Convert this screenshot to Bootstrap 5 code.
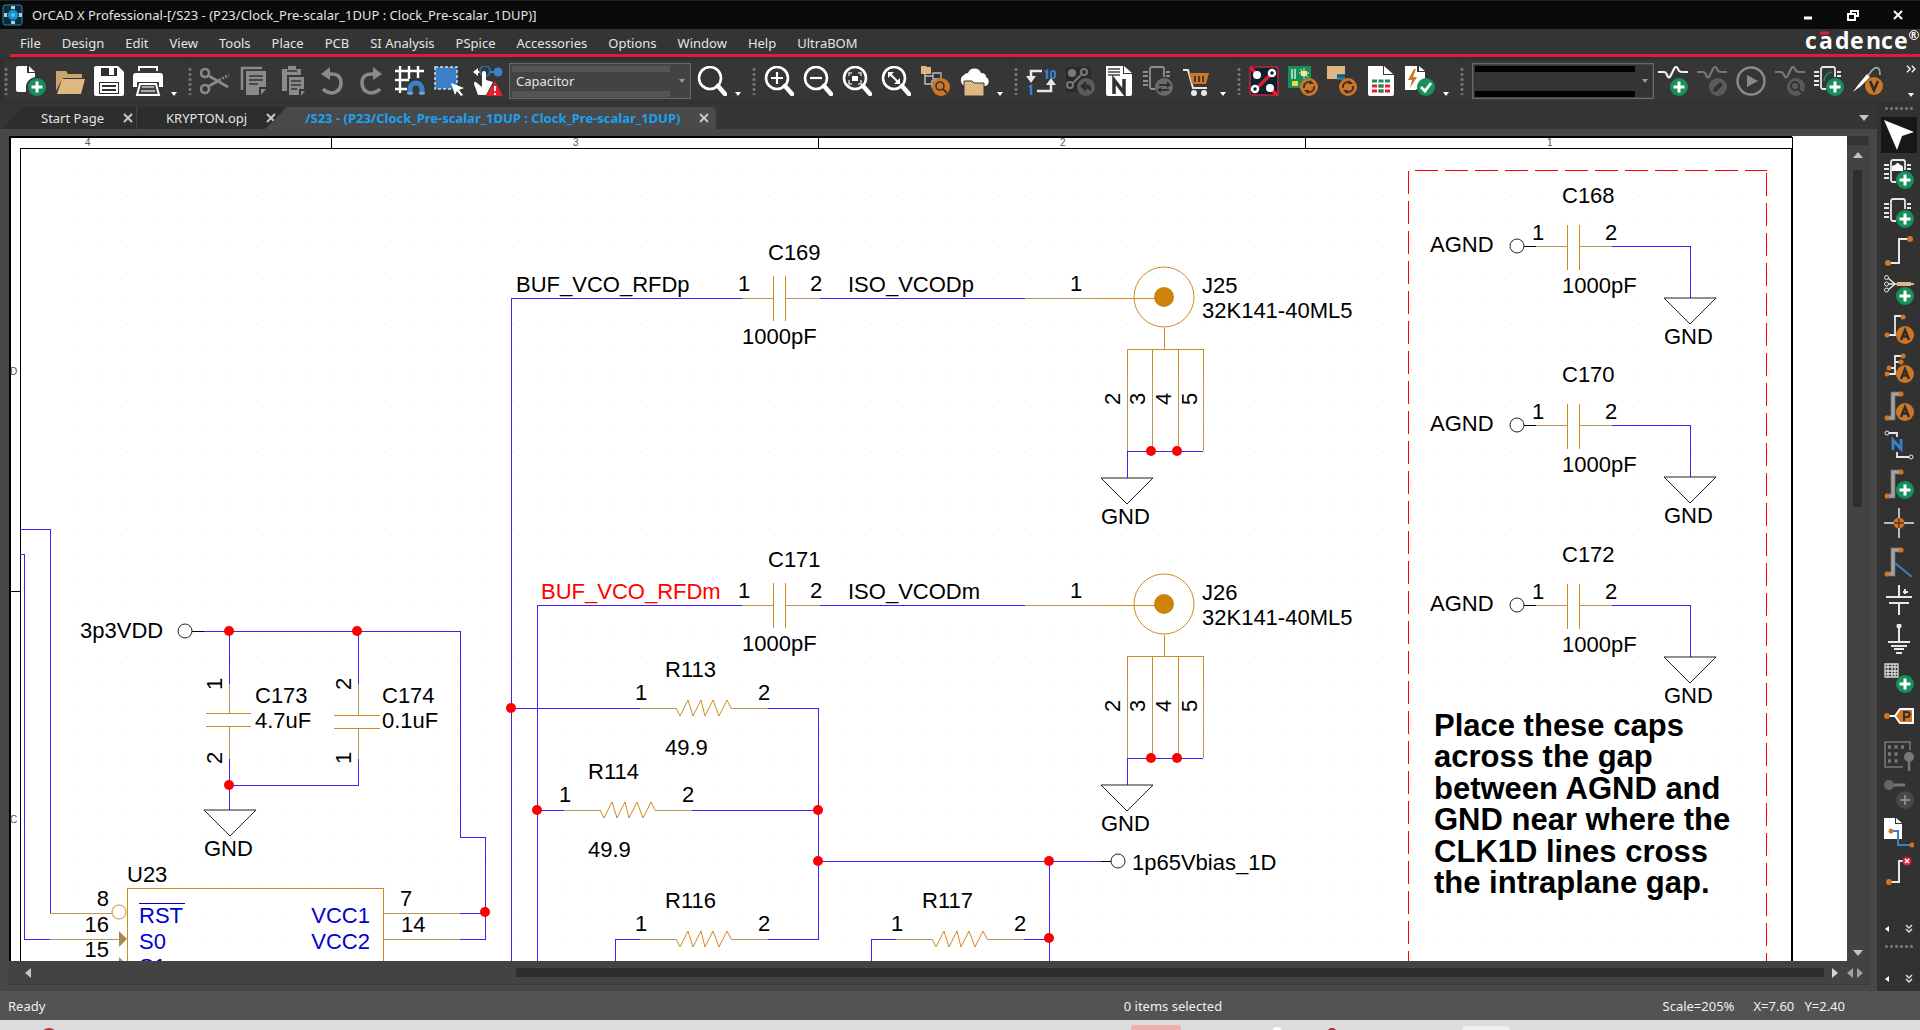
<!DOCTYPE html>
<html lang="en">
<head>
<meta charset="utf-8">
<meta name="viewport" content="width=device-width, initial-scale=1">
<title>OrCAD X Professional</title>
<link href="https://cdn.jsdelivr.net/npm/bootstrap@5.3.0/dist/css/bootstrap.min.css" rel="stylesheet">
<style>
  body { font-family: "Noto Sans", "Open Sans", sans-serif; font-size: 13px; line-height: 18px; color: #e4e4e4; background: #343434; overflow: hidden; }
  button { color: inherit; }
  svg { display: block; }
  .titlebar { height: 29px; background: #0a0a0a; border-top: 1px solid #222; padding-left: 2px; }
  .winbtn { width: 45px; height: 24px; }
  .menubar { height: 28px; margin-left: 10px; padding-left: 10px; border-bottom: 3px solid #e31b38; gap: 21px; }
  .menubar a { color: #e4e4e4; padding-top: 2px; }
  .tools { height: 46px; padding: 3px 0 1px 4px; background: #303030; }
  .toolgroup { height: 42px; background: #363636; border-radius: 4px; }
  .dotgrip { width: 4px; height: 28px; margin-right: 8px; background: radial-gradient(circle, #777 1px, transparent 2px) 0 0/4px 5px; }
  .iconrow { gap: 9px; }
  .ico { width: 30px; height: 30px; }
  .ico svg { width: 30px; height: 30px; }
  .caretbtn { width: 25px; height: 30px; padding: 26px 0 0 8px; }
  .combowrap { margin: 0 6px; }
  .combowrap-first { margin: 0 4px 0 0; }
  .combo { width: 182px; height: 36px; border: 1px solid #6a6a6a; outline: 1px solid #444; outline-offset: -2px; padding: 0 6px; color: #e4e4e4; appearance: none; border-radius: 0;
    background: linear-gradient(#555,#555) 2px 2px/158px 6px no-repeat, linear-gradient(#555,#555) 2px 27px/158px 6px no-repeat, #434343; }
  .combo-dark { background: linear-gradient(#000,#000) 2px 2px/160px 6px no-repeat, linear-gradient(#000,#000) 2px 27px/160px 6px no-repeat, #343434; }
  .combowrap::after { content: ""; position: absolute; right: 6px; top: 16px; border: 3px solid transparent; border-top: 4px solid #999; }
  .tabstrip { height: 26px; background: #353535; padding-left: 3px; }
  .doctab { height: 22px; background: #2d2d2d; clip-path: polygon(19px 0, 100% 0, 100% 100%, 0 100%); }
  .doctab a { padding-left: 29px; }
  .doctab-first a { padding-left: 38px; }
  .doctab-mid { clip-path: none; border-left: 1px solid #444; }
  .doctab-on { background: #494949; color: #1ba1f2; font-weight: 700; margin-left: -18px; border-radius: 0 4px 0 0; clip-path: polygon(22px 0, 100% 0, 100% 100%, 0 100%); }
  .doctab-on a { padding-left: 40px; }
  .closex { width: 16px; height: 16px; color: #c8c8c8; }
  .docarea { background: #474747; padding: 7px 8px 6px 9px; }
  .docframe { background: #434343; border-right: 1px solid #3a3a3a; border-bottom: 1px solid #3a3a3a; }
  .sheetview { background: #fff; }
  .vscroll { width: 21px; border-top: 9px solid #333; padding: 7px 0 5px; }
  .hscroll { height: 23px; padding-left: 16px; }
  .thumb { background: #2e2e2e; }
  .vscroll .thumb { width: 9px; height: 337px; }
  .hscroll .thumb { height: 9px; flex: 1305 1 0; }
  .hscroll .room { flex: 484 1 0; }
  .sidebar-tools { width: 43px; background: #323232; border-radius: 5px 0 0 0; }
  .sidegrip { width: 30px; height: 3px; margin: 4px 0 3px; background: radial-gradient(circle, #777 1px, transparent 2px) 0 0/5px 3px; }
  .side { width: 36px; height: 36px; padding: 3px; }
  .side svg { width: 30px; height: 30px; }
  .side-on { background: #171717; }
  .sideicons { height: 773px; }
  .morerow { height: 24px; width: 36px; }
  .statusbar { height: 29px; background: #535353; color: #f0f0f0; padding: 0 8px; }
  .statusbar .left { flex: 1112 1 0; }
  .statusbar .mid { flex: 537 1 0; }
  .statusbar .right { gap: 19px; padding-right: 67px; }
  .deskedge { height: 10px; background: #dcdcdc; }
  .sch text { font-family: "Liberation Sans", Arial, sans-serif; font-size: 22px; fill: #000; }
  .sch .tiny { font-size: 10px; fill: #555; }
  .sch .net { fill: #0000d0; }
  .sch .hot { fill: #ff0000; }
  .sch .note { font-size: 31px; font-weight: 700; }
  .wire { stroke: #4c1cf8; fill: none; shape-rendering: crispEdges; }
  .pin { stroke: #b5985a; fill: none; shape-rendering: crispEdges; }
  .part { stroke: #d08a1e; fill: none; shape-rendering: crispEdges; }
  .curve { stroke: #d08a1e; fill: none; }
  .ink { stroke: #000; fill: none; shape-rendering: crispEdges; }
  .inkc { stroke: #222; fill: #fff; }
  .dash { stroke: #ff0000; fill: none; stroke-dasharray: 23 7; shape-rendering: crispEdges; }
  .node circle { fill: #ff0000; }
</style>
</head>
<body class="d-flex flex-column vh-100">

<svg width="0" height="0" class="position-absolute" aria-hidden="true">
  <defs>
    <g id="b-plus"><circle cx="21" cy="21" r="9" fill="#16905a"/><path d="M21 15.500v11M15.500 21h11" stroke="#fff" stroke-width="3"/></g>
    <g id="b-a"><circle cx="21" cy="21" r="9" fill="#cf7626"/><path d="M17 26l4-10 4 10M18.500 22.500h5" stroke="#2c2c2c" stroke-width="2.400" fill="none"/></g>
    <g id="b-sync"><circle cx="21" cy="21" r="9" fill="#cf7626"/><path d="M16 22a5 5 0 0 1 8-5M26 20a5 5 0 0 1-8 5" stroke="#333" stroke-width="1.800" fill="none"/><path d="M22 14l4 4h-5zM20 28l-4-4h5z" fill="#333"/></g>
    <g id="b-lens"><circle cx="13" cy="12" r="11" fill="none" stroke="#fff" stroke-width="2.600"/><path d="M21 20l7 8" stroke="#fff" stroke-width="4.500" stroke-linecap="round"/></g>
    <g id="b-chip" fill="none" stroke="#e8e8e8" stroke-width="1.800"><path d="M12 23H9a2 2 0 0 1-2-2V3a2 2 0 0 1 2-2h10a2 2 0 0 1 2 2v8"/><path d="M0 6h5M0 10h5M0 15h5M0 19h5M23 6h4M23 10h4"/></g>
    <g id="b-bus"><path d="M2 27h7V3h8" fill="none" stroke="#8e8e8e" stroke-width="4.500"/><path d="M2 27h7V3h8" fill="none" stroke="#b9b9b9"/><circle cx="3" cy="27" r="2.500" fill="#cf7626"/><circle cx="17" cy="3" r="2.500" fill="#cf7626"/></g>
    <symbol id="i-new" viewBox="0 0 30 30"><path d="M0 2a2 2 0 0 1 2-2h9v7h8v4q-8 2-9 9v6H2a2 2 0 0 1-2-2zM13 0l6 6h-6z" fill="#fff"/><use href="#b-plus"/></symbol>
    <symbol id="i-open" viewBox="0 0 30 30"><path d="M1 5h10l2 3h14v4H8l-3 5-4 8z" fill="#caa46e"/><path d="M7 13h23l-4 15H2z" fill="#deb781"/></symbol>
    <symbol id="i-save" viewBox="0 0 30 30"><path d="M2 0h22l6 6v22a2 2 0 0 1-2 2H2a2 2 0 0 1-2-2V2a2 2 0 0 1 2-2z" fill="#fff"/><path d="M7 2h16v8H7zM5 16h20v12H5z" fill="#303030"/><path d="M15 2h5v7h-5zM6 17h18v10H6z" fill="#fff"/><path d="M8 20h14M8 24h14" stroke="#303030" stroke-width="2"/></symbol>
    <symbol id="i-print" viewBox="0 0 30 30"><path d="M6 5V1h18v4" fill="none" stroke="#fff" stroke-width="2"/><path d="M3 7h24a3 3 0 0 1 3 3v11h-4v-5H4v5H0V10a3 3 0 0 1 3-3z" fill="#fff"/><path d="M7 18h16l3 11H4z" fill="#444" stroke="#fff" stroke-width="2"/><path d="M9 21h12M8 25h14" stroke="#ccc" stroke-width="1.500"/></symbol>
    <symbol id="i-cut" viewBox="0 0 30 30"><g fill="none" stroke="#8a8a8a" stroke-width="2.600"><circle cx="5" cy="7" r="4"/><circle cx="5" cy="23" r="4"/><path d="M9 10l19 11"/><path d="M9 20l9-5"/><path d="M19 14l10-5" stroke-dasharray="2 1.500"/></g></symbol>
    <symbol id="i-copy" viewBox="0 0 30 30"><path d="M3 24V2h20" fill="none" stroke="#8a8a8a" stroke-width="2.500"/><path d="M7 5h20v16h-7v8H7z" fill="#8a8a8a"/><path d="M22 23h5l-5 6z" fill="#8a8a8a"/><path d="M10 10h14M10 14h14M10 18h9" stroke="#343434" stroke-width="1.500"/></symbol>
    <symbol id="i-paste" viewBox="0 0 30 30"><path d="M4 3h6V0h8v3h5v6H9v16H4z" fill="#8a8a8a"/><path d="M11 11h15v12h-5v6H11zM23 25h4l-4 5z" fill="#8a8a8a"/><path d="M9 5h10M13 15h10M13 19h10M13 23h6" stroke="#343434" stroke-width="1.500"/></symbol>
    <symbol id="i-undo" viewBox="0 0 30 30"><path d="M12 8q12-1 12 9 0 8-8 10-6 0-10-4" fill="none" stroke="#8a8a8a" stroke-width="3.500"/><path d="M4 8l9-7v13z" fill="#8a8a8a"/></symbol>
    <symbol id="i-redo" viewBox="0 0 30 30"><path d="M18 8Q6 7 6 17q0 8 8 10 6 0 10-4" fill="none" stroke="#8a8a8a" stroke-width="3.500"/><path d="M26 8l-9-7v13z" fill="#8a8a8a"/></symbol>
    <symbol id="i-grid" viewBox="0 0 30 30"><path d="M5 0v27M14 0v13M23 0v12M0 5h29M0 14h14M0 23h12" stroke="#fff" stroke-width="2.400"/><path d="M15 29v-6a6 6 0 0 1 12 0v6" fill="none" stroke="#3a80c8" stroke-width="5"/><path d="M12 27h6M24 27h6" stroke="#bcd" stroke-width="1"/></symbol>
    <symbol id="i-select" viewBox="0 0 30 30"><path d="M1 1h22v22H1z" fill="#3a80c8" stroke="#cfe0f0" stroke-width="1.500" stroke-dasharray="3 2"/><path d="M17 17l13 5-5 2 4 5-2 1-4-5-2 4z" fill="#fff"/></symbol>
    <symbol id="i-hand" viewBox="0 0 30 30"><path d="M0 6l5-4v3h3v2H5v3z" fill="#fff"/><circle cx="12" cy="5" r="5" fill="none" stroke="#2d6ba8" stroke-width="2"/><circle cx="25" cy="6" r="4.500" fill="#3a80c8"/><path d="M17 6h4" stroke="#3a80c8" stroke-width="2"/><path d="M9 7a2 2 0 0 1 4 0v7l7 2-7 13H5L1 18q0-4 3-1l5 4z" fill="#fff"/><path d="M22 15l8 15H13z" fill="#e3202e"/><path d="M22 20v5M22 27v2" stroke="#fff" stroke-width="1.800"/></symbol>
    <symbol id="i-search" viewBox="0 0 30 30"><use href="#b-lens"/></symbol>
    <symbol id="i-zin" viewBox="0 0 30 30"><use href="#b-lens"/><path d="M13 6v12M7 12h12" stroke="#fff" stroke-width="2.200"/></symbol>
    <symbol id="i-zout" viewBox="0 0 30 30"><use href="#b-lens"/><path d="M7 12h12" stroke="#fff" stroke-width="2.200"/></symbol>
    <symbol id="i-zarea" viewBox="0 0 30 30"><use href="#b-lens"/><path d="M10 10h6v5h-6z" fill="#fff"/><path d="M7 10V7h3M16 7h3v3M19 14v4h-3M10 18H7v-4" fill="none" stroke="#ccc" stroke-width="1.500"/></symbol>
    <symbol id="i-zall" viewBox="0 0 30 30"><use href="#b-lens"/><path d="M9 8l8 8" stroke="#fff" stroke-width="2"/><path d="M7 6h6l-6 6zM19 18h-6l6-6z" fill="#fff"/></symbol>
    <symbol id="i-tree" viewBox="0 0 30 30"><path d="M1 0h5l1 1h4v7H1z" fill="#deb781"/><path d="M5 8v10h7M5 10h8" fill="none" stroke="#bbb" stroke-width="1.500"/><path d="M13 7h8v6h-8zM12 15h7v6h-7z" fill="none" stroke="#bbb" stroke-width="1.300"/><circle cx="21" cy="21" r="9" fill="#cf7626"/><circle cx="20" cy="20" r="4" fill="none" stroke="#333" stroke-width="1.600"/><path d="M23 23l4 4" stroke="#333" stroke-width="2"/></symbol>
    <symbol id="i-cloud" viewBox="0 0 30 30"><path d="M6 20a6 6 0 0 1-1-11q1-2 4-2a7 7 0 0 1 13 0q5 0 5 4a5 5 0 0 1 0 9z" fill="#fff"/><path d="M5 15h8l2 2h10v13H5z" fill="#deb781" stroke="#343434"/></symbol>
    <symbol id="i-renum" viewBox="0 0 30 30"><path d="M16 5H5v7M11 25h14v-8" fill="none" stroke="#e8e8e8" stroke-width="2.500"/><path d="M0 10h10l-5 7zM20 19h10l-5-7z" fill="#e8e8e8"/><path d="M19 6l2-1v8M3 21l2-1v9" stroke="#3a80c8" stroke-width="2.500" fill="none"/><rect x="25" y="5" width="4" height="7" rx="2" fill="none" stroke="#3a80c8" stroke-width="2"/></symbol>
    <symbol id="i-back" viewBox="0 0 30 30"><path d="M1 1h25v13H14v12H1z" fill="#2a2a2a"/><circle cx="7" cy="7" r="4" fill="#7a7a7a"/><circle cx="19" cy="6" r="3" fill="none" stroke="#7a7a7a" stroke-width="2"/><circle cx="5" cy="19" r="3" fill="none" stroke="#7a7a7a" stroke-width="2"/><path d="M8 17l8-8" stroke="#7a7a7a" stroke-width="2"/><circle cx="21" cy="21" r="9" fill="#5c5c5c"/><path d="M15 20l6-5v3q6 0 5 8-2-4-5-3v3z" fill="#2d2d2d"/></symbol>
    <symbol id="i-net" viewBox="0 0 30 30"><path d="M2 0h17v8h9v20a2 2 0 0 1-2 2H4a2 2 0 0 1-2-2zM20 0l8 7h-8z" fill="#fff"/><path d="M4 3h12M4 6h12M4 9h12" stroke="#444" stroke-width="1.500"/><path d="M10 28V14l10 13V13" fill="none" stroke="#303030" stroke-width="3.500"/></symbol>
    <symbol id="i-chipsync" viewBox="0 0 30 30"><g opacity=".5"><use href="#b-chip"/></g><circle cx="21" cy="21" r="9" fill="#6a6a6a"/><path d="M16 19h9M17 24h9" stroke="#303030" stroke-width="1.800"/><path d="M24 15l4 4-4 3zM18 21l-4 3 4 3z" fill="#303030"/></symbol>
    <symbol id="i-cart" viewBox="0 0 30 30"><path d="M1 4h5l5 18h14" fill="none" stroke="#e8e8e8" stroke-width="2"/><path d="M7 7h20l-3 11H10z" fill="#cf7626"/><path d="M13 10v6M17 10v6M21 10v6" stroke="#333" stroke-width="1.800"/><circle cx="12" cy="27" r="3" fill="#e8e8e8"/><circle cx="22" cy="27" r="3" fill="#e8e8e8"/></symbol>
    <symbol id="i-pcb" viewBox="0 0 30 30"><rect x="1" y="1" width="28" height="28" rx="3" fill="#08222e" stroke="#c9203a" stroke-width="1.500"/><path d="M1 1l5 5M7 23L22 8M21 22l8 8" stroke="#e31b38" stroke-width="3.500"/><circle cx="8" cy="9" r="4" fill="#fff"/><circle cx="21" cy="22" r="4" fill="#fff"/><circle cx="23" cy="7" r="3" fill="#08222e" stroke="#fff" stroke-width="2.500"/><circle cx="6" cy="23" r="3" fill="#08222e" stroke="#fff" stroke-width="2.500"/></symbol>
    <symbol id="i-board" viewBox="0 0 30 30"><path d="M0 0h23v22H0z" fill="#16905a"/><path d="M4 3v10M7 3v10" stroke="#cfe9db" stroke-width="1.500"/><path d="M13 5h6v5h-6z" fill="#f4e6a0"/><path d="M16 2v11M11 7h10M12 3l8 8" stroke="#f4e6a0"/><path d="M4 15h6v5H4z" fill="#f6d33a"/><use href="#b-sync"/></symbol>
    <symbol id="i-folders" viewBox="0 0 30 30"><path d="M0 0h18v13H0z" fill="#deb781"/><path d="M10 8h8v6h-8z" fill="#2179a0"/><path d="M10 10h8" stroke="#333"/><use href="#b-sync"/></symbol>
    <symbol id="i-sheet" viewBox="0 0 30 30"><path d="M2 0h15v9h11v19a2 2 0 0 1-2 2H4a2 2 0 0 1-2-2zM18 0l9 8h-9z" fill="#fff"/><g stroke-width="3" fill="none"><path d="M6 15h18" stroke="#16905a" stroke-dasharray="5 1.500"/><path d="M6 20h18M6 25h18" stroke="#e31b38" stroke-dasharray="5 1.500"/><path d="M12.500 20h5M12.500 25h5" stroke="#16905a"/></g></symbol>
    <symbol id="i-check" viewBox="0 0 30 30"><path d="M0 0h12v6h8v7l-9 11H0zM14 0l6 5h-6z" fill="#fff"/><path d="M9 3L3 14h4l-2 8 7-11H8l3-8z" fill="#cf7626"/><circle cx="21" cy="21" r="9" fill="#16905a"/><path d="M16 21l4 4 6-8" fill="none" stroke="#fff" stroke-width="2.800"/></symbol>
    <g id="b-wave"><path d="M0 6h6q2 0 3 3 2 5 4 0l3-6q2-4 4 0 1 3 4 3h6" fill="none" stroke-width="2.200"/></g>
    <symbol id="i-wplus" viewBox="0 0 30 30"><use href="#b-wave" stroke="#eee"/><use href="#b-plus"/></symbol>
    <symbol id="i-wedit" viewBox="0 0 30 30"><use href="#b-wave" stroke="#777"/><circle cx="21" cy="21" r="9" fill="#5a5a5a"/><path d="M16 26l1-4 6-6 3 3-6 6z" fill="#303030"/></symbol>
    <symbol id="i-run" viewBox="0 0 30 30"><circle cx="15" cy="15" r="13.500" fill="none" stroke="#8a8a8a" stroke-width="2.400"/><path d="M11 9l11 6-11 6z" fill="#8a8a8a"/></symbol>
    <symbol id="i-wfind" viewBox="0 0 30 30"><use href="#b-wave" stroke="#777"/><circle cx="21" cy="21" r="9" fill="#5a5a5a"/><circle cx="20" cy="20" r="4" fill="none" stroke="#303030" stroke-width="1.800"/><path d="M23 23l4 4" stroke="#303030" stroke-width="2"/></symbol>
    <symbol id="i-part" viewBox="0 0 30 30"><use href="#b-chip"/><path d="M10 15q1-8 8-9" fill="none" stroke="#16905a" stroke-width="1.500"/><use href="#b-plus"/></symbol>
    <symbol id="i-probe" viewBox="0 0 30 30"><path d="M0 26l5-7L14 8l3 3-9 9z" fill="#fff"/><path d="M15 10q6-10 10-8 2 1 2 7" fill="none" stroke="#aaa" stroke-width="1.600"/><circle cx="21" cy="20" r="9" fill="#cf7626"/><path d="M17 15l4 9 4-9" fill="none" stroke="#303030" stroke-width="2.800"/></symbol>
    <symbol id="s-arrow" viewBox="0 0 30 30"><path d="M0 0l30 12-12 4-5 14z" fill="#fff"/></symbol>
    <symbol id="s-chipcloud" viewBox="0 0 30 30"><use href="#b-chip"/><path d="M8 12V8q0-2 3-2 3-4 5 0 3 0 3 3v3z" fill="#fff"/><use href="#b-plus"/></symbol>
    <symbol id="s-chip" viewBox="0 0 30 30"><use href="#b-chip"/><use href="#b-plus"/></symbol>
    <symbol id="s-wire" viewBox="0 0 30 30"><path d="M4 27h11V3h11" fill="none" stroke="#e8e8e8" stroke-width="2"/><circle cx="4" cy="27" r="3" fill="#cf7626"/><circle cx="26" cy="3" r="3" fill="#cf7626"/></symbol>
    <symbol id="s-bundle" viewBox="0 0 30 30"><path d="M4 3l7 6-7 6M4 9h26" fill="none" stroke="#e8e8e8" stroke-width="1.500"/><circle cx="2.500" cy="2.500" r="2" fill="#323232" stroke="#e8e8e8"/><circle cx="2.500" cy="9" r="2" fill="#323232" stroke="#e8e8e8"/><circle cx="2.500" cy="15" r="2" fill="#323232" stroke="#e8e8e8"/><path d="M13 7h14v4H13z" fill="#deb781"/><use href="#b-plus"/></symbol>
    <symbol id="s-wirea" viewBox="0 0 30 30"><path d="M3 21h8V2h8" fill="none" stroke="#e8e8e8" stroke-width="1.800"/><circle cx="3" cy="21" r="2.500" fill="#cf7626"/><circle cx="19" cy="3" r="2.500" fill="#cf7626"/><use href="#b-a"/></symbol>
    <symbol id="s-wiresa" viewBox="0 0 30 30"><path d="M3 21h8V3h8M5 15h6M11 9h6" fill="none" stroke="#e8e8e8" stroke-width="1.800"/><g fill="#cf7626"><circle cx="3" cy="21" r="2.500"/><circle cx="5" cy="15" r="2.500"/><circle cx="17" cy="9" r="2.500"/><circle cx="19" cy="3" r="2.500"/></g><use href="#b-a"/></symbol>
    <symbol id="s-busa" viewBox="0 0 30 30"><use href="#b-bus"/><use href="#b-a"/></symbol>
    <symbol id="s-n" viewBox="0 0 30 30"><path d="M4 3h9v4M13 22v5h13" fill="none" stroke="#e8e8e8" stroke-width="1.800"/><circle cx="3" cy="3" r="2" fill="#323232" stroke="#e8e8e8"/><circle cx="27" cy="27" r="2" fill="#323232" stroke="#e8e8e8"/><path d="M9 20V10l8 9V9" fill="none" stroke="#3a80c8" stroke-width="2.800"/></symbol>
    <symbol id="s-busplus" viewBox="0 0 30 30"><use href="#b-bus"/><use href="#b-plus"/></symbol>
    <symbol id="s-cross" viewBox="0 0 30 30"><circle cx="15" cy="15" r="5.500" fill="#cf7626"/><path d="M15 0v10M15 20v10M0 15h10M20 15h10" stroke="#e8e8e8" stroke-width="1.500"/><path d="M15 10v10M10 15h10" stroke="#5a3210" stroke-width="1.300"/></symbol>
    <symbol id="s-entry" viewBox="0 0 30 30"><use href="#b-bus"/><path d="M11 16l17 14" stroke="#3a80c8" stroke-width="2"/></symbol>
    <symbol id="s-power" viewBox="0 0 30 30"><path d="M15 0v12M15 18v12M21 4v5M19 7h5" stroke="#e8e8e8" stroke-width="2"/><path d="M2 12h26M5 18h20" stroke="#e8e8e8" stroke-width="2"/></symbol>
    <symbol id="s-ground" viewBox="0 0 30 30"><circle cx="15" cy="2" r="2.500" fill="#e8e8e8"/><path d="M15 2v16M4 18h22M7 22h16M10 25h10M12 29h6" stroke="#e8e8e8" stroke-width="2"/></symbol>
    <symbol id="s-block" viewBox="0 0 30 30"><path d="M1 1h13v13H1zM4 1v13M8 1v13M11 1v13M1 4h13M1 8h13M1 11h13" fill="none" stroke="#d8d8d8" stroke-width="1.300"/><use href="#b-plus"/></symbol>
    <symbol id="s-port" viewBox="0 0 30 30"><path d="M3 14h8l5-7h13v14H16l-5-7" fill="#cf7626" stroke="#fff" stroke-width="2"/><circle cx="3" cy="14" r="3" fill="#cf7626"/><path d="M20 19v-9h3a2.500 2.500 0 0 1 0 5h-3" fill="none" stroke="#303030" stroke-width="2"/></symbol>
    <symbol id="s-blockpin" viewBox="0 0 30 30"><path d="M19 26H1V1h25v8" fill="none" stroke="#777" stroke-width="1.600"/><path d="M4 6h17M4 13h12M4 20h12" stroke="#777" stroke-width="3.500" stroke-dasharray="3 3.500"/><circle cx="25" cy="16" r="5" fill="#777"/><path d="M25 20v10" stroke="#777" stroke-width="2.500"/></symbol>
    <symbol id="s-pin" viewBox="0 0 30 30"><circle cx="5" cy="6" r="5" fill="#666"/><path d="M10 6h11" stroke="#777" stroke-width="3"/><circle cx="21" cy="21" r="9" fill="#484848"/><path d="M21 16v10M16 21h10" stroke="#888" stroke-width="2"/></symbol>
    <symbol id="s-page" viewBox="0 0 30 30"><path d="M0 0h11v6h7v15H0zM12 0l6 5h-6z" fill="#fff"/><path d="M7 13h7v14h13" fill="none" stroke="#3a80c8" stroke-width="2"/><circle cx="7" cy="13" r="2.500" fill="#cf7626"/><circle cx="28" cy="27" r="2.500" fill="#cf7626"/></symbol>
    <symbol id="s-wirex" viewBox="0 0 30 30"><path d="M5 25h10V4h4" fill="none" stroke="#e8e8e8" stroke-width="2"/><circle cx="5" cy="25" r="3" fill="#cf7626"/><circle cx="23" cy="4" r="4.500" fill="#e3202e"/><path d="M21 2l4 4M25 2l-4 4" stroke="#fff" stroke-width="1.500"/></symbol>
    <symbol id="c-down" viewBox="0 0 6 4"><path d="M0 0h6L3 4z" fill="#fff"/></symbol>
    <symbol id="c-x" viewBox="0 0 16 16"><path d="M4 4l8 8M12 4l-8 8" stroke="currentColor" stroke-width="2"/></symbol>
    <symbol id="c-more" viewBox="0 0 12 10"><path d="M1 1l4 4-4 4M7 1l4 4-4 4" fill="none" stroke="#fff" stroke-width="1.600"/></symbol>
  </defs>
</svg>

<header class="titlebar d-flex align-items-center flex-shrink-0">
  <svg width="22" height="22" viewBox="0 0 22 22" aria-hidden="true"><rect x="1" y="1" width="19" height="20" rx="2" fill="#0c2b3c" stroke="#1c88b0"/><path d="M11 2v18M2 11h18" stroke="#b9c9d2" stroke-width="4"/><circle cx="11" cy="11" r="5.500" fill="#1593cf" stroke="#0a3d58"/><circle cx="11" cy="11" r="2" fill="#4cc0f0"/></svg>
  <span class="ms-2 flex-grow-1 text-nowrap">OrCAD X Professional-[/S23 - (P23/Clock_Pre-scalar_1DUP : Clock_Pre-scalar_1DUP)]</span>
  <button class="winbtn btn p-0 border-0 d-flex align-items-center justify-content-center" aria-label="Minimize"><svg width="12" height="12"><path d="M2 9h8" stroke="#fff" stroke-width="3"/></svg></button>
  <button class="winbtn btn p-0 border-0 d-flex align-items-center justify-content-center" aria-label="Restore"><svg width="12" height="12"><path d="M4 4V2h7v5H8" fill="none" stroke="#fff" stroke-width="2"/><path d="M1 5h7v6H1z" fill="none" stroke="#fff" stroke-width="2"/></svg></button>
  <button class="winbtn btn p-0 border-0 d-flex align-items-center justify-content-center" aria-label="Close"><svg width="12" height="12"><path d="M2 2l8 8M10 2l-8 8" stroke="#fff" stroke-width="2"/></svg></button>
</header>

<nav class="menubar d-flex align-items-center flex-shrink-0 text-nowrap" aria-label="Main menu">
  <a class="text-decoration-none" href="#">File</a><a class="text-decoration-none" href="#">Design</a><a class="text-decoration-none" href="#">Edit</a><a class="text-decoration-none" href="#">View</a><a class="text-decoration-none" href="#">Tools</a><a class="text-decoration-none" href="#">Place</a><a class="text-decoration-none" href="#">PCB</a><a class="text-decoration-none" href="#">SI Analysis</a><a class="text-decoration-none" href="#">PSpice</a><a class="text-decoration-none" href="#">Accessories</a><a class="text-decoration-none" href="#">Options</a><a class="text-decoration-none" href="#">Window</a><a class="text-decoration-none" href="#">Help</a><a class="text-decoration-none" href="#">UltraBOM</a>
  <svg class="ms-auto" width="116" height="25" role="img" aria-label="cadence"><text x="1 15 31 46 62 77 90" y="20" font-family="Liberation Sans Narrow, Open Sans, sans-serif" font-size="23" font-weight="700" fill="#fff">cadence</text><path d="M16 4h9" stroke="#e31b38" stroke-width="3"/><circle cx="110" cy="6" r="4.500" fill="none" stroke="#fff"/><text x="107" y="9" font-size="8" font-weight="700" fill="#fff">R</text></svg>
</nav>

<div class="tools d-flex flex-shrink-0" role="toolbar" aria-label="Standard">
  <div class="toolgroup d-flex align-items-center">
    <span class="dotgrip"></span>
    <div class="iconrow d-flex">
      <button class="ico btn p-0 border-0" aria-label="New"><svg><use href="#i-new"/></svg></button>
      <button class="ico btn p-0 border-0" aria-label="Open"><svg><use href="#i-open"/></svg></button>
      <button class="ico btn p-0 border-0" aria-label="Save"><svg><use href="#i-save"/></svg></button>
      <button class="ico btn p-0 border-0" aria-label="Print"><svg><use href="#i-print"/></svg></button>
    </div>
    <button class="caretbtn btn border-0" aria-label="More file tools"><svg width="6" height="4"><use href="#c-down"/></svg></button>
  </div>
  <div class="toolgroup d-flex align-items-center">
    <span class="dotgrip"></span>
    <div class="iconrow d-flex">
      <button class="ico btn p-0 border-0" aria-label="Cut"><svg><use href="#i-cut"/></svg></button>
      <button class="ico btn p-0 border-0" aria-label="Copy"><svg><use href="#i-copy"/></svg></button>
      <button class="ico btn p-0 border-0" aria-label="Paste"><svg><use href="#i-paste"/></svg></button>
      <button class="ico btn p-0 border-0" aria-label="Undo"><svg><use href="#i-undo"/></svg></button>
      <button class="ico btn p-0 border-0" aria-label="Redo"><svg><use href="#i-redo"/></svg></button>
      <button class="ico btn p-0 border-0" aria-label="Snap to grid"><svg><use href="#i-grid"/></svg></button>
      <button class="ico btn p-0 border-0" aria-label="Area select"><svg><use href="#i-select"/></svg></button>
      <button class="ico btn p-0 border-0" aria-label="Drag connected object"><svg><use href="#i-hand"/></svg></button>
    </div>
    <div class="combowrap position-relative"><select class="combo" aria-label="Part search"><option>Capacitor</option></select></div>
    <button class="ico btn p-0 border-0" aria-label="Search"><svg><use href="#i-search"/></svg></button>
    <button class="caretbtn btn border-0" aria-label="More edit tools"><svg width="6" height="4"><use href="#c-down"/></svg></button>
  </div>
  <div class="toolgroup d-flex align-items-center">
    <span class="dotgrip"></span>
    <div class="iconrow d-flex">
      <button class="ico btn p-0 border-0" aria-label="Zoom in"><svg><use href="#i-zin"/></svg></button>
      <button class="ico btn p-0 border-0" aria-label="Zoom out"><svg><use href="#i-zout"/></svg></button>
      <button class="ico btn p-0 border-0" aria-label="Zoom to region"><svg><use href="#i-zarea"/></svg></button>
      <button class="ico btn p-0 border-0" aria-label="Zoom to all"><svg><use href="#i-zall"/></svg></button>
      <button class="ico btn p-0 border-0" aria-label="Hierarchy"><svg><use href="#i-tree"/></svg></button>
      <button class="ico btn p-0 border-0" aria-label="Workspace"><svg><use href="#i-cloud"/></svg></button>
    </div>
    <button class="caretbtn btn border-0" aria-label="More view tools"><svg width="6" height="4"><use href="#c-down"/></svg></button>
  </div>
  <div class="toolgroup d-flex align-items-center">
    <span class="dotgrip"></span>
    <div class="iconrow d-flex">
      <button class="ico btn p-0 border-0" aria-label="Annotate"><svg><use href="#i-renum"/></svg></button>
      <button class="ico btn p-0 border-0" aria-label="Back annotate"><svg><use href="#i-back"/></svg></button>
      <button class="ico btn p-0 border-0" aria-label="Create netlist"><svg><use href="#i-net"/></svg></button>
      <button class="ico btn p-0 border-0" aria-label="Update parts"><svg><use href="#i-chipsync"/></svg></button>
      <button class="ico btn p-0 border-0" aria-label="Bill of materials"><svg><use href="#i-cart"/></svg></button>
    </div>
    <button class="caretbtn btn border-0" aria-label="More design tools"><svg width="6" height="4"><use href="#c-down"/></svg></button>
  </div>
  <div class="toolgroup d-flex align-items-center">
    <span class="dotgrip"></span>
    <div class="iconrow d-flex">
      <button class="ico btn p-0 border-0" aria-label="New layout"><svg><use href="#i-pcb"/></svg></button>
      <button class="ico btn p-0 border-0" aria-label="Sync layout"><svg><use href="#i-board"/></svg></button>
      <button class="ico btn p-0 border-0" aria-label="Sync folders"><svg><use href="#i-folders"/></svg></button>
      <button class="ico btn p-0 border-0" aria-label="Constraint sheet"><svg><use href="#i-sheet"/></svg></button>
      <button class="ico btn p-0 border-0" aria-label="Rule check"><svg><use href="#i-check"/></svg></button>
    </div>
    <button class="caretbtn btn border-0" aria-label="More layout tools"><svg width="6" height="4"><use href="#c-down"/></svg></button>
  </div>
  <div class="toolgroup d-flex align-items-center flex-grow-1">
    <span class="dotgrip"></span>
    <div class="combowrap combowrap-first position-relative"><select class="combo combo-dark" aria-label="Simulation profile"><option></option></select></div>
    <div class="iconrow d-flex">
      <button class="ico btn p-0 border-0" aria-label="New simulation"><svg><use href="#i-wplus"/></svg></button>
      <button class="ico btn p-0 border-0" aria-label="Edit simulation"><svg><use href="#i-wedit"/></svg></button>
      <button class="ico btn p-0 border-0" aria-label="Run"><svg><use href="#i-run"/></svg></button>
      <button class="ico btn p-0 border-0" aria-label="View results"><svg><use href="#i-wfind"/></svg></button>
      <button class="ico btn p-0 border-0" aria-label="PSpice part"><svg><use href="#i-part"/></svg></button>
      <button class="ico btn p-0 border-0" aria-label="Voltage marker"><svg><use href="#i-probe"/></svg></button>
    </div>
    <button class="btn border-0 p-0 ms-auto me-1 d-flex flex-column align-items-center justify-content-between h-75" aria-label="More simulation tools"><svg width="10" height="8"><use href="#c-more"/></svg><svg width="6" height="4"><use href="#c-down"/></svg></button>
  </div>
</div>

<main class="d-flex flex-grow-1 overflow-hidden">
  <section class="d-flex flex-column flex-grow-1 overflow-hidden">
    <div class="tabstrip d-flex align-items-end flex-shrink-0 text-nowrap">
      <div class="doctab doctab-first d-flex align-items-center"><a class="text-reset text-decoration-none" href="#">Start Page</a><button class="closex btn p-0 border-0 ms-3" aria-label="Close Start Page"><svg width="16" height="16"><use href="#c-x"/></svg></button></div>
      <div class="doctab doctab-mid d-flex align-items-center"><a class="text-reset text-decoration-none" href="#">KRYPTON.opj</a><button class="closex btn p-0 border-0 ms-3 me-1" aria-label="Close KRYPTON.opj"><svg width="16" height="16"><use href="#c-x"/></svg></button></div>
      <div class="doctab doctab-on d-flex align-items-center pe-1"><a class="text-reset text-decoration-none" href="#">/S23 - (P23/Clock_Pre-scalar_1DUP : Clock_Pre-scalar_1DUP)</a><button class="closex btn p-0 border-0 ms-3" aria-label="Close page"><svg width="16" height="16"><use href="#c-x"/></svg></button></div>
      <button class="btn border-0 p-0 ms-auto mb-2 me-2" aria-label="List documents"><svg width="10" height="6"><path d="M0 0h10L5 6z" fill="#c4c4c4"/></svg></button>
    </div>
    <div class="docarea d-flex flex-grow-1 overflow-hidden">
      <div class="docframe d-flex flex-column flex-grow-1 overflow-hidden">
        <div class="d-flex flex-grow-1 overflow-hidden">
          <div class="sheetview flex-grow-1 overflow-hidden">
<svg class="sch" width="100%" height="100%" role="img" aria-label="Schematic page 1DUP">
  <defs>
    <path id="dotrow" d="M0 0h1M26 0h1M51 0h1M77 0h1M102 0h1M128 0h1M154 0h1M179 0h1"/>
    <pattern id="dots" x="24" y="144" width="205" height="205" patternUnits="userSpaceOnUse"><g stroke="#c8e6f4" stroke-width="1" transform="translate(1 1)"><use href="#dotrow"/><use href="#dotrow" y="26"/><use href="#dotrow" y="51"/><use href="#dotrow" y="77"/><use href="#dotrow" y="102"/><use href="#dotrow" y="128"/><use href="#dotrow" y="154"/><use href="#dotrow" y="179"/></g></pattern>
    <g id="gnd"><path class="inkc" d="M-26 0H26L0 26z"/><text x="-26" y="46">GND</text></g>
    <g id="sercap">
      <path class="pin" d="M0 0H31M43 0H78"/><path class="part" d="M31 -22V23M43 -22V23"/>
      <text x="-4" y="-7">1</text><text x="68" y="-7">2</text><text x="0" y="46">1000pF</text>
    </g>
    <g id="jack">
      <path class="pin" d="M1025 298H1101M1127 375V451M1152 375V451M1178 375V451M1203 375V451"/>
      <path class="part" d="M1101 298H1164M1164 328V349M1127 375V349H1203V375M1152 349V375M1178 349V375"/>
      <circle class="curve" cx="1164" cy="297" r="30"/><circle cx="1164" cy="297" r="10" fill="#cc8308"/>
      <path class="wire" d="M820 298H1025M1203 451H1127V478"/>
      <g class="node"><circle cx="1151" cy="451" r="5"/><circle cx="1177" cy="451" r="5"/></g>
      <use href="#gnd" x="1127" y="478"/>
      <text x="1070" y="291">1</text><text x="1202" y="318">32K141-40ML5</text>
      <text transform="translate(1120 405) rotate(-90)">2</text><text transform="translate(1145 405) rotate(-90)">3</text><text transform="translate(1171 405) rotate(-90)">4</text><text transform="translate(1197 405) rotate(-90)">5</text>
    </g>
    <g id="res"><path class="pin" d="M0 0H36M91 0H128"/><path class="curve" d="M36 0L40 8L48 -8L53 8L61 -8L65 8L73 -8L79 8L87 -8L91 0"/><text x="-5" y="-8">1</text><text x="118" y="-8">2</text></g>
    <g id="acap">
      <path class="ink" d="M1524 246H1536"/><circle class="inkc" cx="1517" cy="246" r="7"/>
      <path class="pin" d="M1536 246H1567M1579 246H1612"/><path class="part" d="M1567 225V270M1579 225V270"/>
      <path class="wire" d="M1612 246H1690V298"/><use href="#gnd" x="1690" y="298"/>
      <text x="1430" y="252">AGND</text><text x="1532" y="240">1</text><text x="1605" y="240">2</text><text x="1562" y="293">1000pF</text>
    </g>
  </defs>
  <g transform="translate(-9 -136)">
    <rect x="66" y="160" width="1720" height="810" fill="url(#dots)"/>
    <path class="ink" stroke-width="2" d="M10 970V137H1792M1792 148V970"/>
    <path class="ink" d="M20 970V148H1792V137M331 137V148M818 137V148M1305 137V148M10 591H20"/>
    <text class="tiny" x="85" y="146">4</text><text class="tiny" x="573" y="146">3</text><text class="tiny" x="1060" y="146">2</text><text class="tiny" x="1547" y="146">1</text>
    <text class="tiny" x="10" y="375">D</text><text class="tiny" x="10" y="823">C</text>

    <!-- VCO clock pair -->
    <path class="wire" d="M511 970V298H742"/>
    <use href="#sercap" x="742" y="298"/><use href="#jack"/>
    <text x="768" y="260">C169</text><text x="516" y="292">BUF_VCO_RFDp</text><text x="848" y="292">ISO_VCODp</text><text x="1202" y="293">J25</text>
    <path class="wire" d="M537 970V605H742"/>
    <use href="#sercap" x="742" y="605"/><use href="#jack" y="307"/>
    <text x="768" y="567">C171</text><text class="hot" x="541" y="599">BUF_VCO_RFDm</text><text x="848" y="599">ISO_VCODm</text><text x="1202" y="600">J26</text>

    <!-- bias resistors -->
    <path class="wire" d="M511 708H640M768 708H818V939H768M537 810H564M692 810H818M818 861H1101M1049 861V970M1024 939H1049M640 939H615V970M896 939H871V970"/>
    <use href="#res" x="640" y="708"/><use href="#res" x="564" y="810"/><use href="#res" x="640" y="939"/><use href="#res" x="896" y="939"/>
    <text x="665" y="677">R113</text><text x="588" y="779">R114</text><text x="665" y="908">R116</text><text x="922" y="908">R117</text>
    <text x="665" y="755">49.9</text><text x="588" y="857">49.9</text>
    <path class="ink" d="M1101 861H1111"/><circle class="inkc" cx="1118" cy="861" r="7"/><text x="1132" y="870">1p65Vbias_1D</text>

    <!-- supply decoupling -->
    <text x="80" y="638">3p3VDD</text><path class="ink" d="M192 631H204"/><circle class="inkc" cx="185" cy="631" r="7"/>
    <path class="wire" d="M204 631H460V837H485V939H460M460 913H485M229 631V684M229 759V811M358 631V684M358 759V785H229"/>
    <path class="pin" d="M229 684V713M229 726V759M358 684V715M358 728V759"/><path class="part" d="M206 713H251M206 726H251M334 715H380M334 728H380"/>
    <use href="#gnd" x="230" y="810"/>
    <text x="255" y="703">C173</text><text x="255" y="728">4.7uF</text><text x="382" y="703">C174</text><text x="382" y="728">0.1uF</text>
    <text transform="translate(222 690) rotate(-90)">1</text><text transform="translate(222 764) rotate(-90)">2</text><text transform="translate(351 690) rotate(-90)">2</text><text transform="translate(351 764) rotate(-90)">1</text>

    <!-- U23 -->
    <path class="wire" d="M20 529H50V913M20 554H24V939H50"/>
    <path class="pin" d="M50 913H112M50 939H119M383 913H460M383 939H460"/><path class="part" d="M127 970V888H383V970"/>
    <circle class="curve" cx="119" cy="912" r="7"/><path d="M119 931l8 8-8 8zM119 957l8 8-8 8z" fill="#a8894a"/>
    <text x="127" y="882">U23</text><text x="109" y="906" text-anchor="end">8</text><text x="109" y="932" text-anchor="end">16</text><text x="109" y="957" text-anchor="end">15</text>
    <text x="400" y="906">7</text><text x="401" y="932">14</text>
    <path d="M139 903H185" stroke="#0000d0" stroke-width="1" shape-rendering="crispEdges"/>
    <text class="net" x="139" y="923">RST</text><text class="net" x="139" y="949">S0</text><text class="net" x="139" y="974">S1</text><text class="net" x="370" y="923" text-anchor="end">VCC1</text><text class="net" x="370" y="949" text-anchor="end">VCC2</text>

    <g class="node"><circle cx="511" cy="708" r="5"/><circle cx="537" cy="810" r="5"/><circle cx="818" cy="810" r="5"/><circle cx="818" cy="861" r="5"/><circle cx="1049" cy="861" r="5"/><circle cx="1049" cy="938" r="5"/><circle cx="229" cy="631" r="5"/><circle cx="357" cy="631" r="5"/><circle cx="229" cy="785" r="5"/><circle cx="485" cy="912" r="5"/></g>

    <!-- gap capacitors -->
    <path class="dash" d="M1415 170H1767M1408 171V970M1766 173V970"/>
    <use href="#acap"/><use href="#acap" y="179"/><use href="#acap" y="359"/>
    <text x="1562" y="203">C168</text><text x="1562" y="382">C170</text><text x="1562" y="562">C172</text>
    <text class="note" x="1434" y="736">Place these caps</text><text class="note" x="1434" y="767">across the gap</text><text class="note" x="1434" y="799">between AGND and</text><text class="note" x="1434" y="830">GND near where the</text><text class="note" x="1434" y="862">CLK1D lines cross</text><text class="note" x="1434" y="893">the intraplane gap.</text>
  </g>
</svg>
          </div>
          <div class="vscroll d-flex flex-column align-items-center justify-content-between flex-shrink-0">
            <div class="d-flex flex-column align-items-center gap-2">
              <button class="btn border-0 p-0" aria-label="Scroll up"><svg width="10" height="6"><path d="M0 6h10L5 0z" fill="#c4c4c4"/></svg></button>
              <div class="thumb mt-1"></div>
            </div>
            <button class="btn border-0 p-0" aria-label="Scroll down"><svg width="10" height="6"><path d="M0 0h10L5 6z" fill="#c4c4c4"/></svg></button>
          </div>
        </div>
        <div class="hscroll d-flex align-items-center flex-shrink-0">
          <button class="btn border-0 p-0" aria-label="Scroll left"><svg width="6" height="10"><path d="M6 0v10L0 5z" fill="#c4c4c4"/></svg></button>
          <div class="room"></div>
          <div class="thumb"></div>
          <button class="btn border-0 p-0 ms-2" aria-label="Scroll right"><svg width="6" height="10"><path d="M0 0v10l6-5z" fill="#d4d4d4"/></svg></button>
          <button class="btn border-0 p-0 ms-2 me-1" aria-label="Resize views"><svg width="18" height="10"><path d="M7 0v10L1 5zM11 0v10l6-5z" fill="#a0a0a0"/></svg></button>
        </div>
      </div>
    </div>
  </section>

  <aside class="sidebar-tools d-flex flex-column align-items-center flex-shrink-0" role="toolbar" aria-label="Draw">
    <span class="sidegrip"></span>
    <div class="sideicons d-flex flex-column justify-content-between mt-1">
      <button class="side side-on btn border-0 rounded-0" aria-label="Select"><svg><use href="#s-arrow"/></svg></button>
      <button class="side btn border-0" aria-label="Workspace part"><svg><use href="#s-chipcloud"/></svg></button>
      <button class="side btn border-0" aria-label="Place part"><svg><use href="#s-chip"/></svg></button>
      <button class="side btn border-0" aria-label="Place wire"><svg><use href="#s-wire"/></svg></button>
      <button class="side btn border-0" aria-label="Place net group"><svg><use href="#s-bundle"/></svg></button>
      <button class="side btn border-0" aria-label="Auto wire"><svg><use href="#s-wirea"/></svg></button>
      <button class="side btn border-0" aria-label="Auto wire many"><svg><use href="#s-wiresa"/></svg></button>
      <button class="side btn border-0" aria-label="Auto wire bus"><svg><use href="#s-busa"/></svg></button>
      <button class="side btn border-0" aria-label="Net alias"><svg><use href="#s-n"/></svg></button>
      <button class="side btn border-0" aria-label="Place bus"><svg><use href="#s-busplus"/></svg></button>
      <button class="side btn border-0" aria-label="Place junction"><svg><use href="#s-cross"/></svg></button>
      <button class="side btn border-0" aria-label="Bus entry"><svg><use href="#s-entry"/></svg></button>
      <button class="side btn border-0" aria-label="Place power"><svg><use href="#s-power"/></svg></button>
      <button class="side btn border-0" aria-label="Place ground"><svg><use href="#s-ground"/></svg></button>
      <button class="side btn border-0" aria-label="Hierarchical block"><svg><use href="#s-block"/></svg></button>
      <button class="side btn border-0" aria-label="Place port"><svg><use href="#s-port"/></svg></button>
      <button class="side btn border-0" aria-label="Block pins"><svg><use href="#s-blockpin"/></svg></button>
      <button class="side btn border-0" aria-label="Place pin"><svg><use href="#s-pin"/></svg></button>
      <button class="side btn border-0" aria-label="Off-page connector"><svg><use href="#s-page"/></svg></button>
      <button class="side btn border-0" aria-label="No connect"><svg><use href="#s-wirex"/></svg></button>
    </div>
    <div class="morerow d-flex align-items-center justify-content-between px-1 mt-auto"><svg width="4" height="6"><path d="M4 0v6L0 3z" fill="#fff"/></svg><svg width="8" height="10"><path d="M1 1l3 3 3-3M1 5l3 3 3-3" fill="none" stroke="#ddd" stroke-width="1.500"/></svg></div>
    <span class="sidegrip"></span>
    <div class="morerow d-flex align-items-center justify-content-between px-1 mt-3"><svg width="4" height="6"><path d="M4 0v6L0 3z" fill="#fff"/></svg><svg width="8" height="10"><path d="M1 1l3 3 3-3M1 5l3 3 3-3" fill="none" stroke="#ddd" stroke-width="1.500"/></svg></div>
  </aside>
</main>

<footer class="flex-shrink-0">
  <div class="statusbar d-flex align-items-center text-nowrap">
    <span class="left">Ready</span><span class="mid">0 items selected</span>
    <span class="right d-flex"><span>Scale=205%</span><span>X=7.60&nbsp;&nbsp; Y=2.40</span></span>
  </div>
  <div class="deskedge overflow-hidden" aria-hidden="true">
    <svg width="100%" height="10"><circle cx="49" cy="17" r="9" fill="#c62f2f"/><rect x="1131" y="5" width="50" height="12" rx="4" fill="#efaeae"/><circle cx="1277" cy="12" r="5" fill="#fff"/><circle cx="1332" cy="13" r="5" fill="#c0202e"/><rect x="1462" y="6" width="48" height="12" rx="4" fill="#f0f0f0"/></svg>
  </div>
</footer>
<script src="https://cdn.jsdelivr.net/npm/bootstrap@5.3.0/dist/js/bootstrap.bundle.min.js"></script>
</body>
</html>
